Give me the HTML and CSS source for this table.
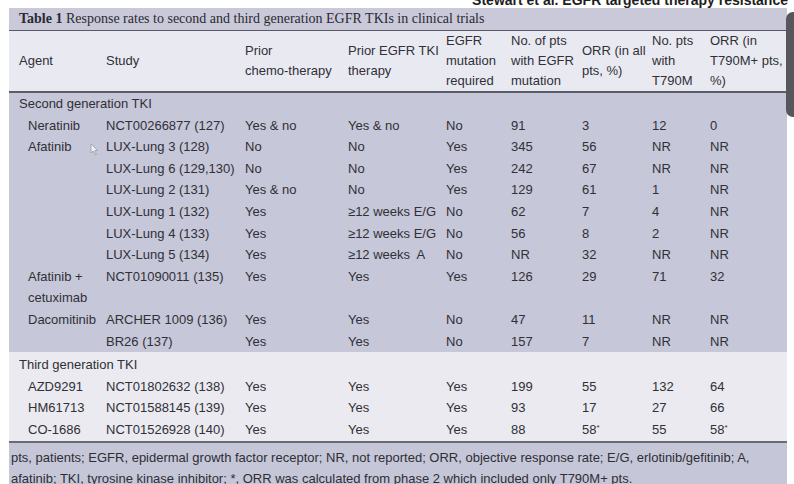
FILE: index.html
```html
<!DOCTYPE html>
<html lang="en">
<head>
<meta charset="utf-8">
<title>Table 1 Response rates</title>
<link rel="stylesheet" href="styles.css">
</head>
<body>
<div class="running-head">Stewart et al. EGFR targeted therapy resistance</div>
<div class="sheet">
  <div class="caption"><b>Table 1</b> Response rates to second and third generation EGFR TKIs in clinical trials</div>
  <table class="data">
    <colgroup>
      <col class="c1"><col class="c2"><col class="c3"><col class="c4"><col class="c5"><col class="c6"><col class="c7"><col class="c8"><col class="c9">
    </colgroup>
    <thead>
      <tr>
        <th class="first">Agent</th>
        <th>Study</th>
        <th>Prior<br>chemo-therapy</th>
        <th>Prior EGFR TKI<br>therapy</th>
        <th>EGFR<br>mutation<br>required</th>
        <th>No. of pts<br>with EGFR<br>mutation</th>
        <th>ORR (in all<br>pts, %)</th>
        <th>No. pts<br>with<br>T790M</th>
        <th>ORR (in<br>T790M+ pts,<br>%)</th>
      </tr>
    </thead>
    <tbody class="second">
      <tr><td class="group" colspan="9">Second generation TKI</td></tr>
      <tr><td class="agent">Neratinib</td><td>NCT00266877 (127)</td><td>Yes &amp; no</td><td>Yes &amp; no</td><td>No</td><td>91</td><td>3</td><td>12</td><td>0</td></tr>
      <tr><td class="agent">Afatinib</td><td>LUX-Lung 3 (128)</td><td>No</td><td>No</td><td>Yes</td><td>345</td><td>56</td><td>NR</td><td>NR</td></tr>
      <tr><td class="agent"></td><td>LUX-Lung 6 (129,130)</td><td>No</td><td>No</td><td>Yes</td><td>242</td><td>67</td><td>NR</td><td>NR</td></tr>
      <tr><td class="agent"></td><td>LUX-Lung 2 (131)</td><td>Yes &amp; no</td><td>No</td><td>Yes</td><td>129</td><td>61</td><td>1</td><td>NR</td></tr>
      <tr><td class="agent"></td><td>LUX-Lung 1 (132)</td><td>Yes</td><td>≥12 weeks E/G</td><td>No</td><td>62</td><td>7</td><td>4</td><td>NR</td></tr>
      <tr><td class="agent"></td><td>LUX-Lung 4 (133)</td><td>Yes</td><td>≥12 weeks E/G</td><td>No</td><td>56</td><td>8</td><td>2</td><td>NR</td></tr>
      <tr><td class="agent"></td><td>LUX-Lung 5 (134)</td><td>Yes</td><td>≥12 weeks&nbsp; A</td><td>No</td><td>NR</td><td>32</td><td>NR</td><td>NR</td></tr>
      <tr><td class="agent">Afatinib + cetuximab</td><td>NCT01090011 (135)</td><td>Yes</td><td>Yes</td><td>Yes</td><td>126</td><td>29</td><td>71</td><td>32</td></tr>
      <tr><td class="agent">Dacomitinib</td><td>ARCHER 1009 (136)</td><td>Yes</td><td>Yes</td><td>No</td><td>47</td><td>11</td><td>NR</td><td>NR</td></tr>
      <tr><td class="agent"></td><td>BR26 (137)</td><td>Yes</td><td>Yes</td><td>No</td><td>157</td><td>7</td><td>NR</td><td>NR</td></tr>
    </tbody>
    <tbody class="third">
      <tr><td class="group" colspan="9">Third generation TKI</td></tr>
      <tr><td class="agent">AZD9291</td><td>NCT01802632 (138)</td><td>Yes</td><td>Yes</td><td>Yes</td><td>199</td><td>55</td><td>132</td><td>64</td></tr>
      <tr><td class="agent">HM61713</td><td>NCT01588145 (139)</td><td>Yes</td><td>Yes</td><td>Yes</td><td>93</td><td>17</td><td>27</td><td>66</td></tr>
      <tr><td class="agent">CO-1686</td><td>NCT01526928 (140)</td><td>Yes</td><td>Yes</td><td>Yes</td><td>88</td><td>58<sup>*</sup></td><td>55</td><td>58<sup>*</sup></td></tr>
    </tbody>
  </table>
  <div class="footnote">pts, patients; EGFR, epidermal growth factor receptor; NR, not reported; ORR, objective response rate; E/G, erlotinib/gefitinib; A, afatinib; TKI, tyrosine kinase inhibitor; *, ORR was calculated from phase 2 which included only T790M+ pts.</div>
</div>
<svg class="cursor" width="9" height="13" viewBox="0 0 9 13"><path d="M1 1 L1 10 L3.2 8 L5 12 L6.4 11.4 L4.7 7.6 L7.6 7.4 Z" fill="#f2f2f6" stroke="#9a9aa6" stroke-width="0.8"/></svg>
<div class="edge-tab"></div>
</body>
</html>
```
FILE: styles.css
```css
html, body {
  margin: 0;
  padding: 0;
  background: #ffffff;
}
body {
  position: relative;
  width: 794px;
  height: 484px;
  overflow: hidden;
  font-family: "Liberation Sans", Arial, sans-serif;
  font-size: 13px;
  color: #303036;
}
.running-head {
  height: 8px;
  line-height: 0px;
  padding-right: 6px;
  text-align: right;
  font-weight: bold;
  font-size: 14px;
  color: #1e1e22;
  overflow: hidden;
}
.sheet {
  width: 778px;
  height: 474px;
  margin-left: 9px;
  display: flex;
  flex-direction: column;
  background-color: #c5c6d8;
}
.caption {
  flex: none;
  height: 22px;
  line-height: 22px;
  padding-left: 10px;
  background-color: #c9c9da;
  border-bottom: 1px solid #5a5a66;
  font-family: "Liberation Serif", "Times New Roman", serif;
  font-size: 14px;
  color: #2a2a30;
}
.caption b {
  font-weight: bold;
}
.data {
  flex: none;
  width: 778px;
  table-layout: fixed;
  border-collapse: collapse;
  border-spacing: 0;
}
.c1 { width: 97px; }
.c2 { width: 139px; }
.c3 { width: 103px; }
.c4 { width: 98px; }
.c5 { width: 65px; }
.c6 { width: 71px; }
.c7 { width: 70px; }
.c8 { width: 58px; }
.c9 { width: 77px; }
.data th {
  height: 60px;
  padding: 0;
  text-align: left;
  vertical-align: middle;
  font-weight: normal;
  line-height: 20px;
  white-space: nowrap;
  background-color: #e9e9f1;
  border-bottom: 2px solid #5c5c66;
}
.data th.first,
.data td.group {
  padding-left: 10px;
}
.data td {
  padding: 0;
  line-height: 21.6px;
  vertical-align: top;
  text-align: left;
  white-space: nowrap;
}
.data td.agent {
  padding-left: 19px;
  white-space: normal;
}
.second td {
  background-color: #c6c7d9;
}
.third td {
  background-color: #eaeaf0;
}
.third tr:first-child td {
  padding-top: 2px;
}
.third tr:last-child td {
  border-bottom: 2px solid #6a6a74;
}
.data sup {
  font-size: 8px;
  line-height: 0;
  vertical-align: 4px;
}
.footnote {
  flex: 1;
  padding: 4px 0 0 2px;
  line-height: 21px;
  background-color: #c5c6d8;
  color: #2e2e34;
}
.cursor {
  position: absolute;
  left: 90px;
  top: 143px;
}
.edge-tab {
  position: absolute;
  left: 786px;
  top: 12px;
  width: 14px;
  height: 105px;
  background-color: #56565c;
  border-radius: 7px;
}
```
